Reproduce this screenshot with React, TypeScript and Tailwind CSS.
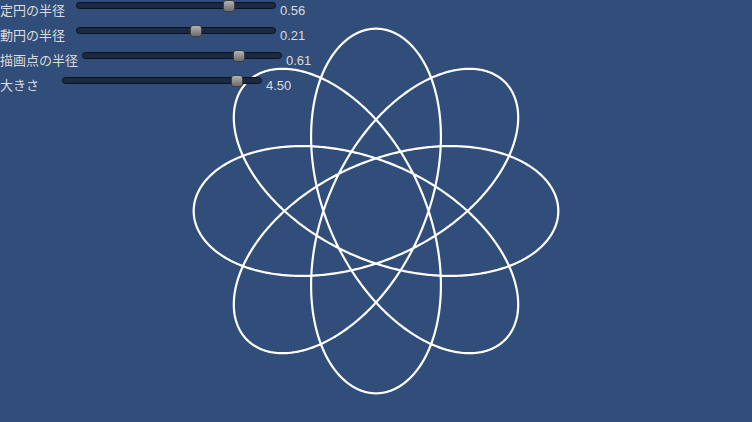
import React from 'react'

const R = 0.56
const r = 0.21
const d = 0.61
const size = 4.5
const unit = 42.2 * size

function buildPath() {
  const a = R - r
  const k = a / r
  const steps = 2400
  const pts: string[] = []
  for (let i = 0; i <= steps; i++) {
    const t = (i / steps) * Math.PI * 6
    const x = a * Math.cos(t) + d * Math.cos(k * t)
    const y = a * Math.sin(t) - d * Math.sin(k * t)
    pts.push(`${(376 + x * unit).toFixed(2)},${(211 - y * unit).toFixed(2)}`)
  }
  return 'M' + pts.join('L') + 'Z'
}

function Slider({ handleLeft }: { handleLeft: string }) {
  return (
    <div className="relative w-[200px] h-[12px] shrink-0">
      <div className="absolute inset-x-0 top-[2px] h-[7px] rounded-full bg-[#1b2a42] border border-[#0a1220]" />
      <div
        className={`absolute top-0 h-[12px] w-[12px] rounded-[3px] border border-[#3a3d42] bg-gradient-to-b from-[#b4b4b4] to-[#6c6c6c] ${handleLeft}`}
      />
    </div>
  )
}

function Row({
  label,
  labelWidth,
  handleLeft,
  value,
}: {
  label: string
  labelWidth: string
  handleLeft: string
  value: string
}) {
  return (
    <div className="flex items-start h-[25px]">
      <div className={`${labelWidth} shrink-0 mt-[4px] text-[13px] leading-[14px] whitespace-nowrap`}>{label}</div>
      <Slider handleLeft={handleLeft} />
      <div className="ml-[4px] mt-[4px] text-[13px] leading-[14px]">{value}</div>
    </div>
  )
}

export default function App() {
  const path = buildPath()
  return (
    <div
      className="relative w-[752px] h-[422px] overflow-hidden bg-[#314d79] text-[#dcdcdc]"
      style={{ fontFamily: '"Liberation Sans", "Noto Sans CJK JP", sans-serif' }}
    >
      <svg className="absolute inset-0" width="752" height="422" viewBox="0 0 752 422">
        <path d={path} fill="none" stroke="#ffffff" strokeWidth="2.2" strokeLinejoin="round" />
      </svg>

      {/* parameter controls */}
      <div className="relative flex flex-col">
        <Row label="定円の半径" labelWidth="w-[76px]" handleLeft="left-[147px]" value="0.56" />
        <Row label="動円の半径" labelWidth="w-[76px]" handleLeft="left-[114px]" value="0.21" />
        <Row label="描画点の半径" labelWidth="w-[82px]" handleLeft="left-[151px]" value="0.61" />
        <Row label="大きさ" labelWidth="w-[62px]" handleLeft="left-[169px]" value="4.50" />
      </div>
    </div>
  )
}
